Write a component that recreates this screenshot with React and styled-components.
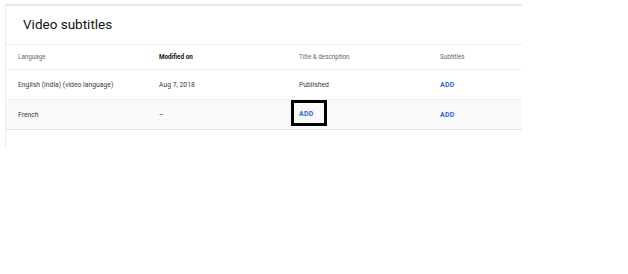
import React from 'react';
import styled, { createGlobalStyle } from 'styled-components';

const GlobalStyle = createGlobalStyle`
  html, body {
    margin: 0;
    padding: 0;
    background: #fff;
    font-family: Roboto, 'Liberation Sans', Arial, sans-serif;
  }
`;

const rows = [
  { language: 'English (India) (video language)', modified: 'Aug 7, 2018', title: 'Published', shaded: false },
  { language: 'French', modified: '–', title: 'ADD', shaded: true, highlight: true },
];

const App = () => (
  <>
    <GlobalStyle />
    <Panel>
      <Title>Video subtitles</Title>
      <HeaderRow>
        <HeadCell>Language</HeadCell>
        <HeadCell $bold>Modified on</HeadCell>
        <HeadCell>Title &amp; description</HeadCell>
        <HeadCell>Subtitles</HeadCell>
      </HeaderRow>
      {rows.map((row) => (
        <Row key={row.language} $shaded={row.shaded}>
          <Cell>{row.language}</Cell>
          <Cell>{row.modified}</Cell>
          <Cell>
            {row.highlight ? (
              <Highlight><AddLink>{row.title}</AddLink></Highlight>
            ) : (
              row.title
            )}
          </Cell>
          <Cell><AddLink>ADD</AddLink></Cell>
        </Row>
      ))}
    </Panel>
  </>
);

export default App;

const Panel = styled.div`
  margin: 4px 0 0 5px;
  width: 517px;
  height: 144px;
  border-top: 2px solid #e9e9e9;
  border-left: 1px solid #ececec;
  box-sizing: border-box;
`;

const Title = styled.h1`
  margin: 0;
  height: 38px;
  padding-left: 17px;
  padding-bottom: 2px;
  box-sizing: border-box;
  display: flex;
  align-items: center;
  font-size: 13.5px;
  font-weight: 400;
  color: #111;
  font-family: Roboto, 'Open Sans', sans-serif;
`;

const Grid = styled.div`
  display: grid;
  grid-template-columns: 141px 140px 141px 1fr;
  align-items: center;
`;

const HeaderRow = styled(Grid)`
  height: 24px;
  border-top: 1px solid #ededed;
  border-bottom: 1px solid #ededed;
`;

const HeadCell = styled.div`
  padding-left: 12px;
  font-size: 6.3px;
  color: ${(p) => (p.$bold ? '#111' : '#666')};
  font-weight: ${(p) => (p.$bold ? 700 : 400)};
`;

const Row = styled(Grid)`
  height: 29px;
  background: ${(p) => (p.$shaded ? '#f9f9f9' : '#fff')};
  border-bottom: 1px solid ${(p) => (p.$shaded ? '#e6e6e6' : '#efefef')};
`;

const Cell = styled.div`
  display: flex;
  align-items: center;
  padding-left: 12px;
  font-size: 6.8px;
  color: #3a3a3a;
`;

const AddLink = styled.span`
  font-size: 7px;
  font-weight: 700;
  color: #2f6ad6;
  letter-spacing: 0.2px;
`;

const Highlight = styled.span`
  display: inline-flex;
  align-items: center;
  box-sizing: border-box;
  width: 36px;
  height: 26px;
  margin: 0 0 4px -8px;
  padding: 2px 0 0 5px;
  border: 3px solid #000;
`;
